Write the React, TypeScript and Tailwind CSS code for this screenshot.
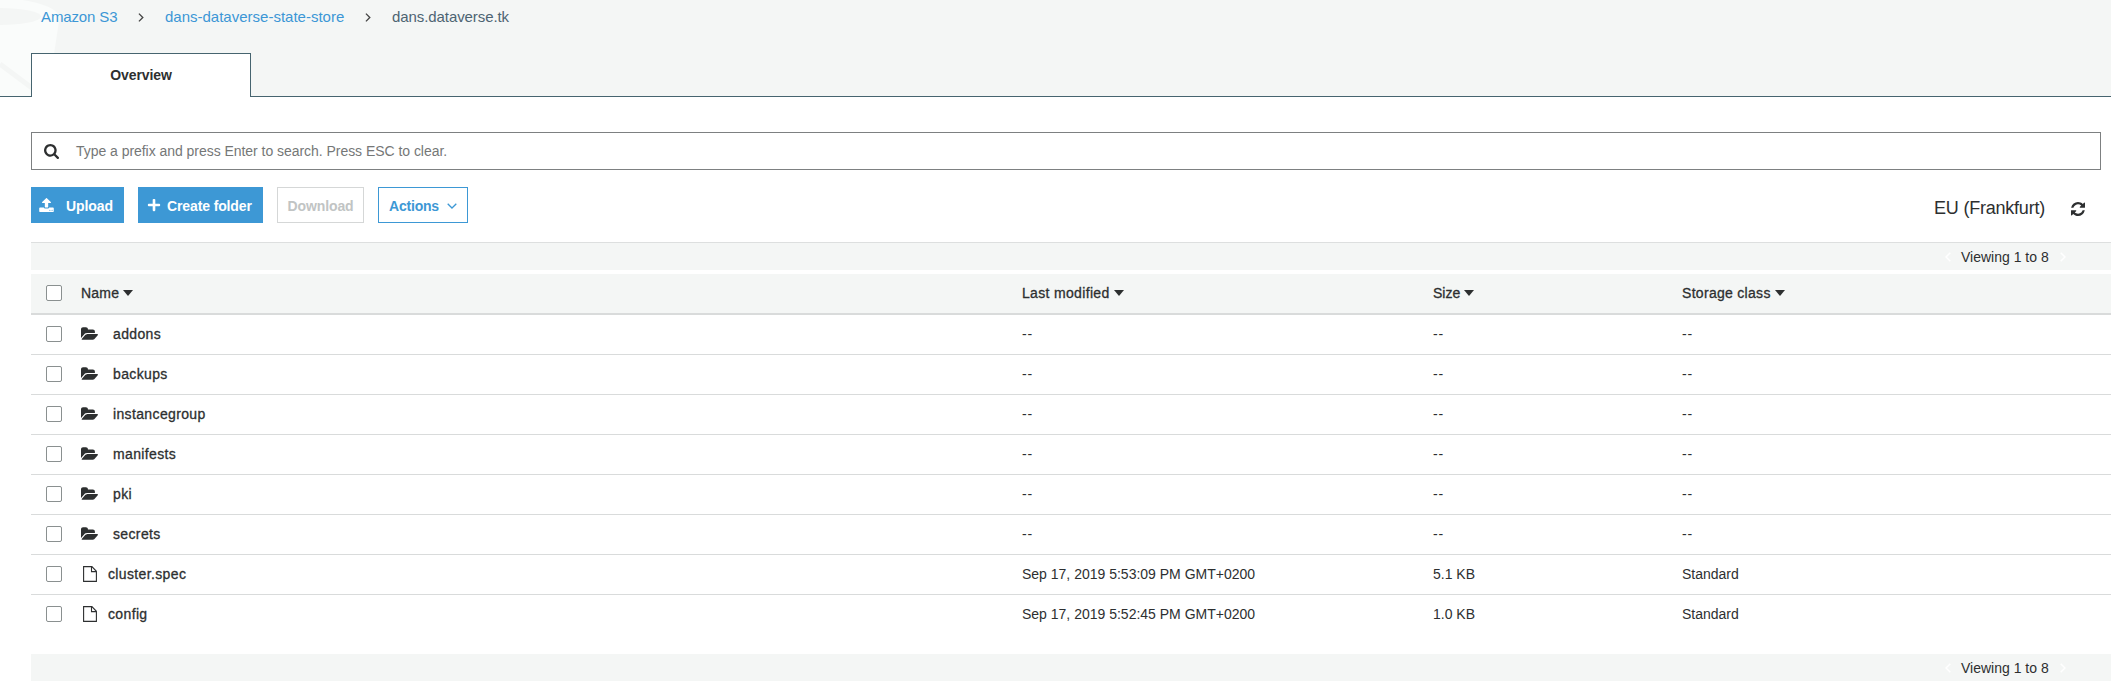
import React from "react";
import { FaPlus } from "react-icons/fa";

type Entry = { name: string; folder: boolean; modified: string; size: string; storage: string };

const folders = ["addons", "backups", "instancegroup", "manifests", "pki", "secrets"];
const entries: Entry[] = [
  ...folders.map((name) => ({ name, folder: true, modified: "--", size: "--", storage: "--" })),
  { name: "cluster.spec", folder: false, modified: "Sep 17, 2019 5:53:09 PM GMT+0200", size: "5.1 KB", storage: "Standard" },
  { name: "config", folder: false, modified: "Sep 17, 2019 5:52:45 PM GMT+0200", size: "1.0 KB", storage: "Standard" },
];

const columns = "grid grid-cols-[50px_941px_411px_249px_1fr] items-center";
const medium = "[-webkit-text-stroke:0.3px_currentColor]";

function Chevron({ className, flip }: { className?: string; flip?: boolean }) {
  return (
    <svg viewBox="0 0 6 10" className={className} fill="none" stroke="currentColor" strokeWidth="1.5">
      <path d={flip ? "M5.3 0.7 1 5l4.3 4.3" : "M0.7 0.7 5 5 0.7 9.3"} />
    </svg>
  );
}

function Checkbox() {
  return <span className="ml-[15px] block size-4 rounded-[2px] border border-[#8a9090] bg-white" />;
}

function SearchIcon() {
  return (
    <svg viewBox="0 0 1664 1664" className="size-[15px]" fill="currentColor">
      <path d="M1152 704q0-185-131.500-316.500T704 256 387.500 387.500 256 704t131.500 316.500T704 1152t316.500-131.500T1152 704zm512 832q0 52-38 90t-90 38q-54 0-90-38l-343-342q-179 124-399 124-143 0-273.500-55.500t-225-150-150-225T0 704t55.500-273.500 150-225 225-150T704 0t273.500 55.500 225 150 150 225T1408 704q0 220-124 399l343 343q37 37 37 90z" />
    </svg>
  );
}

function FolderIcon() {
  return (
    <svg viewBox="0 0 1879 1408" className="h-[13px] w-[17px]" fill="currentColor">
      <path d="M1879 824q0 31-31 66l-336 396q-43 51-120.500 86.500T1248 1408H160q-34 0-60.500-13T73 1352q0-31 31-66l336-396q43-51 120.500-86.500T704 768h1088q34 0 60.500 13t26.500 43zM1536 480v160H704q-94 0-197 47.500T343 807L6 1203l-5 6q0-4-.5-12.500T0 1184V224q0-92 66-158T224 0h320q92 0 158 66t66 158v32h544q92 0 158 66t66 158z" />
    </svg>
  );
}

function FileIcon() {
  return (
    <svg viewBox="0 0 14 16" className="h-4 w-3.5" fill="none" stroke="currentColor" strokeWidth="1.1">
      <path d="M0.6 0.6h8.300l4.500 4.700v10.100H0.600zM8.500 0.600v5h4.900" />
    </svg>
  );
}

function UploadIcon() {
  return (
    <svg viewBox="0 -60 1664 1600" className="h-[14px] w-[15px]" fill="currentColor">
      <path d="M1280 1344q0-26-19-45t-45-19-45 19-19 45 19 45 45 19 45-19 19-45zm256 0q0-26-19-45t-45-19-45 19-19 45 19 45 45 19 45-19 19-45zm128-224v320q0 40-28 68t-68 28H96q-40 0-68-28t-28-68v-320q0-40 28-68t68-28h427q21 56 70.500 92t110.500 36h256q61 0 110.500-36t70.500-92h427q40 0 68 28t28 68zm-325-648q-17 40-59 40h-256v448q0 26-19 45t-45 19H704q-26 0-45-19t-19-45V512H384q-42 0-59-40-17-39 14-69L787-45q18-19 45-19t45 19l448 448q31 30 14 69z" />
    </svg>
  );
}

function RefreshIcon() {
  return (
    <svg viewBox="0 0 1536 1536" className="size-[14px]" fill="currentColor">
      <path d="M1511 928q0 5-1 7-64 268-268 434.500T764 1536q-146 0-282.500-55T238 1324l-129 129q-19 19-45 19t-45-19-19-45V960q0-26 19-45t45-19h448q26 0 45 19t19 45-19 45l-137 137q71 66 161 102t187 36q134 0 250-65t186-179q11-17 53-117 8-23 30-23h192q13 0 22.500 9.500t9.500 22.500zm25-800v448q0 26-19 45t-45 19h-448q-26 0-45-19t-19-45 19-45l138-138Q969 256 768 256q-134 0-250 65T332 500q-11 17-53 117-8 23-30 23H50q-13 0-22.500-9.500T18 608v-7q65-268 270-434.500T768 0q146 0 284 55.500T1297 212l130-129q19-19 45-19t45 19 19 45z" />
    </svg>
  );
}

function Pager() {
  return (
    <div className="flex items-center text-[14px]">
      <Chevron flip className="h-[10px] w-1.5 text-white" />
      <span className="ml-[10px] w-[88px] whitespace-nowrap">Viewing 1 to 8</span>
      <Chevron className="ml-[11px] h-[10px] w-1.5 text-white" />
    </div>
  );
}

function HeaderCell({ label, tracking = "" }: { label: string; tracking?: string }) {
  return (
    <div className={`flex items-center gap-1 pb-0.5 ${medium}`}>
      <span className={tracking}>{label}</span>
      <svg viewBox="0 0 10 6" className="h-1.5 w-2.5" fill="currentColor">
        <path d="M0 0h10L5 6z" />
      </svg>
    </div>
  );
}

function Value({ children }: { children: string }) {
  return <span className={children === "--" ? "tracking-[0.8px]" : ""}>{children}</span>;
}

export default function App() {
  return (
    <div className="flex h-[688px] w-full flex-col overflow-hidden bg-white font-['Liberation_Sans',Arial,sans-serif] text-[14px] leading-5 text-[#2d2f30]">
      <header className="relative flex h-[97px] shrink-0 flex-col justify-between bg-[#f4f6f5]">
        <svg viewBox="0 0 60 96" className="absolute left-0 top-0 h-24 w-[60px]">
          <path d="M0 0H22C42 3 59 9 59.500 18L54 54 46 96H0z" fill="#fafcfb" />
          <ellipse cx="0" cy="16.500" rx="41" ry="8.500" fill="#f4f6f5" />
          <path d="M0 64 36 91" stroke="#f4f6f5" strokeWidth="5" />
        </svg>
        <nav className="relative flex h-[34px] items-center pl-[41px] text-[15px]">
          <a className="w-[76px] whitespace-nowrap tracking-[-0.12px] text-[#3c97d6]">Amazon S3</a>
          <Chevron className="ml-[21px] h-[9px] w-1.5 text-[#444]" />
          <a className="ml-[21px] w-[179px] whitespace-nowrap text-[#3c97d6]">dans-dataverse-state-store</a>
          <Chevron className="ml-[21px] h-[9px] w-1.5 text-[#444]" />
          <span className="ml-[21px] tracking-[-0.08px] text-[#4d6472]">dans.dataverse.tk</span>
        </nav>
        <div className="relative flex h-11">
          <div className="w-[31px] border-b border-[#46646f]" />
          <div className="flex w-[220px] items-center justify-center border-x border-t border-[#46646f] bg-white pb-0.5 font-bold tracking-[-0.08px]">Overview</div>
          <div className="grow border-b border-[#46646f]" />
        </div>
      </header>

      <main className="flex flex-col pl-[31px] pt-[35px]">
        <div className="mr-[10px] flex h-[38px] items-center border border-[#7d8081] pl-3">
          <SearchIcon />
          <span className="ml-[17px] tracking-[-0.04px] text-[#757777]">Type a prefix and press Enter to search. Press ESC to clear.</span>
        </div>

        <div className="mt-[17px] flex h-9 items-center">
          <button className="flex h-9 w-[93px] items-center bg-[#3d98d5] pl-2 font-bold text-white">
            <UploadIcon />
            <span className="ml-3 pt-0.5 tracking-[-0.1px]">Upload</span>
          </button>
          <button className="ml-3.5 flex h-9 w-[125px] items-center bg-[#3d98d5] pl-[9px] font-bold text-white">
            <FaPlus className="size-[14px]" />
            <span className="ml-1.5 whitespace-nowrap pt-0.5 tracking-[-0.12px]">Create folder</span>
          </button>
          <button className="ml-3.5 flex h-9 w-[87px] items-center justify-center border border-[#d5d7d7] pt-0.5 font-bold tracking-[-0.1px] text-[#c1c4c4]">Download</button>
          <button className="ml-3.5 flex h-9 w-[90px] items-center border border-[#3d98d5] pl-[10px] font-bold text-[#3d98d5]">
            <span className="pt-0.5 tracking-[-0.2px]">Actions</span>
            <svg viewBox="0 0 10 6" className="ml-2 mt-0.5 h-1.5 w-2.5" fill="none" stroke="currentColor" strokeWidth="1.3">
              <path d="M0.700 0.700 5 5 9.300 0.700" />
            </svg>
          </button>
          <span className="ml-auto pt-1.5 text-[18px] tracking-[-0.22px]">EU (Frankfurt)</span>
          <span className="ml-[26px] mr-[26px] mt-2"><RefreshIcon /></span>
        </div>

        <div className="mt-[19px] flex h-7 items-center justify-end border-t border-[#dddfdf] bg-[#f4f6f5] pr-[45px]">
          <Pager />
        </div>

        <div className={`mt-1 h-[41px] border-b-2 border-[#d9dbdb] bg-[#f4f6f5] ${columns}`}>
          <div className="pb-px"><Checkbox /></div>
          <HeaderCell label="Name" tracking="tracking-[0.2px]" />
          <HeaderCell label="Last modified" tracking="tracking-[0.33px]" />
          <HeaderCell label="Size" />
          <HeaderCell label="Storage class" tracking="tracking-[0.3px]" />
        </div>

        <div className="flex flex-col">
          {entries.map((e) => (
            <div key={e.name} className={`h-10 border-b border-[#d9dbdb] pb-0.5 last:border-transparent ${columns}`}>
              <Checkbox />
              <div className={`flex items-center ${medium}`}>
                {e.folder ? <FolderIcon /> : <span className="ml-0.5"><FileIcon /></span>}
                <span className={`tracking-[0.36px] ${e.folder ? "ml-[15px]" : "ml-[11px]"}`}>{e.name}</span>
              </div>
              <Value>{e.modified}</Value>
              <Value>{e.size}</Value>
              <Value>{e.storage}</Value>
            </div>
          ))}
        </div>

        <div className="mt-[19px] flex h-[27px] items-center justify-end bg-[#f4f6f5] pr-[45px]">
          <Pager />
        </div>
      </main>
    </div>
  );
}
